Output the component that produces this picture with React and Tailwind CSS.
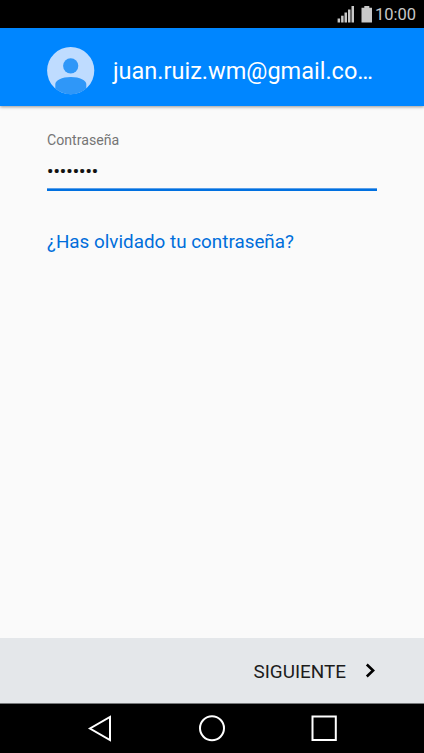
import React from "react";

const StatusBar = () => {
  return (
    <div className="h-7 shrink-0 bg-black flex items-center justify-end pr-2 text-[#c8c8c8]">
      <svg width="17" height="17" viewBox="0 0 17 17" fill="currentColor">
        <rect x="0.600" y="12.500" width="2.500" height="4" />
        <rect x="4.100" y="9.700" width="2.500" height="6.800" />
        <rect x="7.500" y="6.500" width="2.500" height="10" />
        <rect x="11" y="3.500" width="2.500" height="13" />
        <rect x="14.500" y="0" width="2.500" height="16.500" />
      </svg>
      <svg className="ml-[7px]" width="11" height="17" viewBox="0 0 11 17" fill="currentColor">
        <path d="M3.300 0h5v1.700h2.700v14.800H0.500V1.700h2.800z" />
      </svg>
      <span className="ml-[3px] pt-[2px] text-[16.5px] leading-[26px]">10:00</span>
    </div>
  );
};

const Header = () => {
  return (
    <header className="h-[78px] shrink-0 bg-[#0086ff] flex items-center pl-[47px] pt-2 shadow-[0_1px_3px_rgba(0,0,0,0.4)]">
      <svg width="48" height="48" viewBox="0 0 48 48">
        <circle cx="23.700" cy="23.600" r="23.600" fill="#bfdcff" />
        <circle cx="23.700" cy="18.800" r="7.600" fill="#2f97f8" />
        <path d="M8.300 41.500v-4.500c0-3.500 6.500-7 15.500-7s15.500 3.500 15.500 7v4.500a23.600 23.600 0 0 1-31 0z" fill="#2f97f8" />
      </svg>
      <h1 className="ml-[18px] whitespace-nowrap text-white text-[23.5px] leading-8">
        juan.ruiz.wm@gmail.co…
      </h1>
    </header>
  );
};

const App = () => {
  return (
    <div className="h-screen flex flex-col bg-[#fafafa] font-['Roboto',sans-serif] overflow-hidden">
      <StatusBar />
      <Header />
      <main className="flex-1 px-[47px] pt-[25px]">
        <p className="text-[14.15px] leading-[18px] text-[#757575]">Contraseña</p>
        <div className="h-[39px] pt-[3px] text-[19px] leading-[39px] text-[#111] [-webkit-text-stroke:0.2px_#111]">
          ••••••••
        </div>
        <div className="h-[3px] bg-[#0070e0] border-t border-[#5a9fe9]"></div>
        <a className="block mt-[39px] text-[18.85px] leading-6 text-[#006edb]">
          ¿Has olvidado tu contraseña?
        </a>
      </main>
      <button className="h-[66px] shrink-0 bg-[#e4e7ea] border-b border-[#777a7c] flex items-center justify-end pr-[47px] pt-[2px] text-[#1c1c1c] text-[18.9px]">
        <span className="pt-[2px]">SIGUIENTE</span>
        <svg className="ml-[17px] -mt-[1px]" width="14" height="16" viewBox="0 0 14 16" fill="none" stroke="#000" strokeWidth="2.6">
          <path d="M3.800 1.500l6.300 6-6.300 6" />
        </svg>
      </button>
      <nav className="h-[49px] shrink-0 bg-black">
        <svg width="424" height="49" viewBox="0 0 424 49" fill="none" stroke="#fff" strokeWidth="2">
          <path d="M110 13v23L90 24.500z" />
          <circle cx="212" cy="24.300" r="12" />
          <rect x="312.500" y="12.500" width="23.300" height="23.500" />
        </svg>
      </nav>
    </div>
  );
};

export default App;
